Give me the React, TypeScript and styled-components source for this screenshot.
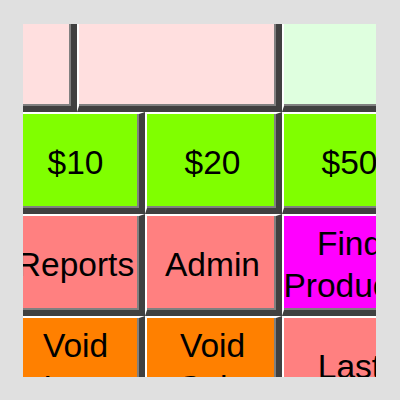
import React from 'react'
import styled, { createGlobalStyle } from 'styled-components'

const GlobalStyle = createGlobalStyle`
    html, body {
        margin: 0;
        padding: 0;
        background: #e0e0e0;
    }
`

const Page = styled.div`
    padding: 24px 0 0 23px;
`

// the visible window onto the key grid, which is scrolled a bit up and left
const Viewport = styled.div`
    width: 353px;
    height: 353px;
    overflow: hidden;
    background: #404040;
`

const Board = styled.div`
    display: flex;
    flex-direction: column;
    margin: -14px 0 0 -15px;
`

const Row = styled.div`
    display: flex;
    flex: 0 0 102px;
`

const Key = styled.button<{ $bg: string; $w: number }>`
    flex: 0 0 ${(p) => p.$w}px;
    height: 102px;
    box-sizing: border-box;
    margin: 0;
    padding: 4px 4px 0 6px;
    border-style: solid;
    border-width: 2px 6px 6px 2px;
    border-color: #ffffff #404040 #404040 #ffffff;
    box-shadow: inset -2px -2px 0 #808080;
    background: ${(p) => p.$bg};
    color: #000;
    font-family: "Liberation Sans", Arial, sans-serif;
    font-size: 33.5px;
    line-height: 42px;
    display: flex;
    align-items: center;
    justify-content: center;
    text-align: center;
    overflow: hidden;
    cursor: pointer;
`

const W = 137

const rows = [
    [
        { label: '', bg: '#ffdfdf', w: 69 },
        { label: '', bg: '#ffdfdf', w: 205 },
        { label: '', bg: '#dfffdf', w: W },
    ],
    [
        { label: '$10', bg: '#80ff00', w: W },
        { label: '$20', bg: '#80ff00', w: W },
        { label: '$50', bg: '#80ff00', w: W },
    ],
    [
        { label: 'Reports', bg: '#ff8080', w: W },
        { label: 'Admin', bg: '#ff8080', w: W },
        { label: 'Find Products', bg: '#ff00ff', w: W },
    ],
    [
        { label: 'Void Item', bg: '#ff8000', w: W },
        { label: 'Void Sale', bg: '#ff8000', w: W },
        { label: 'Last', bg: '#ff8080', w: W },
    ],
]

export default function App() {
    return (
        <Page>
            <GlobalStyle />
            <Viewport>
                <Board>
                    {rows.map((row, i) => (
                        <Row key={i}>
                            {row.map((k, j) => (
                                <Key key={j} $bg={k.bg} $w={k.w}>
                                    {k.label}
                                </Key>
                            ))}
                        </Row>
                    ))}
                </Board>
            </Viewport>
        </Page>
    )
}
